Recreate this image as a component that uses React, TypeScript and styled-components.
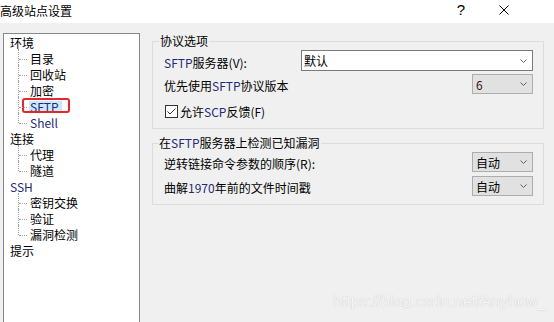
import React from "react";
import styled, { createGlobalStyle } from "styled-components";

const GlobalStyle = createGlobalStyle`
  body {
    margin: 0;
    background: #f0f0f0;
  }
`;

interface ITreeNode {
  label: string;
  latin?: boolean;
  selected?: boolean;
  children?: { label: string; latin?: boolean; selected?: boolean }[];
}

const TREE: ITreeNode[] = [
  {
    label: "环境",
    children: [
      { label: "目录" },
      { label: "回收站" },
      { label: "加密" },
      { label: "SFTP", latin: true, selected: true },
      { label: "Shell", latin: true },
    ],
  },
  { label: "连接", children: [{ label: "代理" }, { label: "隧道" }] },
  {
    label: "SSH",
    latin: true,
    children: [{ label: "密钥交换" }, { label: "验证" }, { label: "漏洞检测" }],
  },
  { label: "提示" },
];

const Chevron = () => (
  <svg width="7" height="4" viewBox="0 0 7 4">
    <polyline
      points="0.5,0.5 3.5,3.5 6.5,0.5"
      fill="none"
      stroke="#606060"
      strokeWidth="1"
    />
  </svg>
);

const ComboBox = ({
  value,
  width,
  variant = "list",
}: {
  value: React.ReactNode;
  width: number;
  variant?: "edit" | "list";
}) => (
  <Combo $variant={variant} style={{ width }}>
    <span>{value}</span>
    <Chevron />
  </Combo>
);

export default function App() {
  return (
    <>
      <GlobalStyle />
      <Window>
        <TitleBar>
          <Caption>高级站点设置</Caption>
          <HelpMark>?</HelpMark>
          <CloseButton>
            <svg width="10" height="10" viewBox="0 0 10 10">
              <path d="M0.5 0.5 L9.5 9.5 M9.5 0.5 L0.5 9.5" stroke="#000" strokeWidth="1" />
            </svg>
          </CloseButton>
        </TitleBar>

        <Body>
          {/* 左侧树 */}
          <TreePanel>
            {TREE.map((node) => (
              <div key={node.label}>
                <TreeRow>{node.latin ? <Latin>{node.label}</Latin> : node.label}</TreeRow>
                {node.children?.map((child, i) => (
                  <ChildRow key={child.label} $last={i === node.children!.length - 1}>
                    {child.selected ? (
                      <>
                        <Selected>
                          <Latin>{child.label}</Latin>
                        </Selected>
                        <Highlight />
                      </>
                    ) : child.latin ? (
                      <Latin>{child.label}</Latin>
                    ) : (
                      child.label
                    )}
                  </ChildRow>
                ))}
              </div>
            ))}
          </TreePanel>

          {/* 右侧设置 */}
          <Settings>
            <Group>
              <Legend $indent={6}>协议选项</Legend>
              <GroupBody $bottom={7}>
                <Row $height={21}>
                  <Label>
                    <Latin>SFTP</Latin>服务器(<u>V</u>):
                  </Label>
                  <ComboBox value="默认" width={232} variant="edit" />
                </Row>
                <Row $height={20}>
                  <Label>
                    优先使用<Latin>SFTP</Latin>协议版本
                  </Label>
                  <ComboBox value={<Digit>6</Digit>} width={61} />
                </Row>
                <CheckRow>
                  <CheckBox>
                    <svg width="11" height="11" viewBox="0 0 11 11">
                      <polyline
                        points="1.5,5.5 4,8 9.5,2.5"
                        fill="none"
                        stroke="#333"
                        strokeWidth="1"
                      />
                    </svg>
                  </CheckBox>
                  <span>
                    允许<Latin>SCP</Latin>反馈(<u>F</u>)
                  </span>
                </CheckRow>
              </GroupBody>
            </Group>

            <Group $gap={7}>
              <Legend $indent={5}>
                在<Latin>SFTP</Latin>服务器上检测已知漏洞
              </Legend>
              <GroupBody $bottom={8} $gap={4}>
                <Row $height={20}>
                  <Label>
                    逆转链接命令参数的顺序(<u>R</u>):
                  </Label>
                  <ComboBox value="自动" width={61} />
                </Row>
                <Row $height={20}>
                  <Label>
                    曲解<Latin>1970</Latin>年前的文件时间戳
                  </Label>
                  <ComboBox value="自动" width={61} />
                </Row>
              </GroupBody>
            </Group>
          </Settings>

          <Watermark>https://blog.csdn.net/Anyhow_</Watermark>
        </Body>
      </Window>
    </>
  );
}

const Window = styled.div`
  position: relative;
  width: 554px;
  height: 322px;
  overflow: hidden;
  display: flex;
  flex-direction: column;
  background: #f0f0f0;
  font-family: "Noto Sans CJK SC", "Microsoft YaHei", sans-serif;
  font-size: 12px;
  color: #000;

  u {
    text-decoration: none;
  }
`;

const TitleBar = styled.div`
  height: 23px;
  flex-shrink: 0;
  display: flex;
  align-items: flex-start;
  background: #fff;
`;
const Caption = styled.div`
  margin-left: 0;
  padding-top: 2px;
  line-height: 17px;
  font-size: 12px;
`;
const HelpMark = styled.div`
  margin-left: auto;
  margin-right: 34px;
  padding-top: 1px;
  font-family: "Liberation Sans", sans-serif;
  font-size: 15px;
  line-height: 18px;
`;
const CloseButton = styled.div`
  margin-right: 45px;
  padding-top: 5px;
  line-height: 0;
`;

const Body = styled.div`
  flex: 1;
  display: flex;
  align-items: flex-start;
  padding: 10px 0 0 3px;
`;

const TreePanel = styled.div`
  flex-shrink: 0;
  width: 137px;
  height: 300px;
  box-sizing: border-box;
  padding: 1px 0 0 6px;
  background: #fff;
  border: 1px solid #828790;
`;
const TreeRow = styled.div`
  height: 16px;
  line-height: 16px;
  white-space: nowrap;
`;
const ChildRow = styled(TreeRow)<{ $last?: boolean }>`
  position: relative;
  padding-left: 20px;

  &::before {
    content: "";
    position: absolute;
    left: 8px;
    top: -2px;
    height: ${(p) => (p.$last ? "10px" : "18px")};
    border-left: 1px dotted #a0a0a0;
  }
  &::after {
    content: "";
    position: absolute;
    left: 9px;
    top: 8px;
    width: 8px;
    border-top: 1px dotted #a0a0a0;
  }
`;
const Selected = styled.span`
  display: inline-block;
  margin-left: -1px;
  padding: 0 3px 0 1px;
  line-height: 12px;
  background: #cce8ff;
`;
const Highlight = styled.span`
  position: absolute;
  left: 12px;
  top: -1px;
  width: 48px;
  height: 15px;
  box-sizing: border-box;
  border: 2px solid #e5262b;
  border-radius: 3px;
`;
const Latin = styled.span`
  color: #1f2a78;
`;
const Digit = styled.span`
  color: #3a1010;
`;

const Settings = styled.div`
  width: 392px;
  margin: 1px 0 0 12px;
  display: flex;
  flex-direction: column;
`;
const Group = styled.fieldset<{ $gap?: number }>`
  min-width: 0;
  margin: ${(p) => p.$gap ?? 0}px 0 0 0;
  padding: 0;
  border: 1px solid #dcdcdc;
`;
const Legend = styled.legend<{ $indent: number }>`
  margin-left: ${(p) => p.$indent}px;
  padding: 0 1px;
  line-height: 14px;
  font-size: 12px;
`;
const GroupBody = styled.div<{ $bottom: number; $gap?: number }>`
  display: flex;
  flex-direction: column;
  gap: ${(p) => p.$gap ?? 3}px;
  padding: 2px 10px ${(p) => p.$bottom}px 11px;
`;
const Row = styled.div<{ $height: number }>`
  height: ${(p) => p.$height}px;
  display: flex;
  align-items: center;
  justify-content: space-between;
`;
const Label = styled.span`
  padding-top: 3px;
  white-space: nowrap;
`;
const Combo = styled.div<{ $variant: "edit" | "list" }>`
  height: 100%;
  box-sizing: border-box;
  display: flex;
  align-items: center;
  justify-content: space-between;
  padding: 0 5px 0 ${(p) => (p.$variant === "edit" ? 2 : 3)}px;
  background: ${(p) => (p.$variant === "edit" ? "#fff" : "#e1e1e1")};
  border: 1px solid ${(p) => (p.$variant === "edit" ? "#7a7a7a" : "#adadad")};
`;
const CheckRow = styled.div`
  height: 20px;
  margin-top: 4px;
  display: flex;
  align-items: center;
  gap: 2px;
  padding-left: 1px;
`;
const CheckBox = styled.div`
  width: 13px;
  height: 13px;
  box-sizing: border-box;
  border: 1px solid #333;
  background: #fff;
  line-height: 0;
`;

const Watermark = styled.div`
  position: absolute;
  left: 333px;
  top: 293px;
  font-family: "Liberation Sans", Arial, sans-serif;
  font-size: 16px;
  line-height: 18px;
  color: #f6f6f6;
  text-shadow: 0 0 1px rgba(0, 0, 0, 0.22);
  pointer-events: none;
`;
